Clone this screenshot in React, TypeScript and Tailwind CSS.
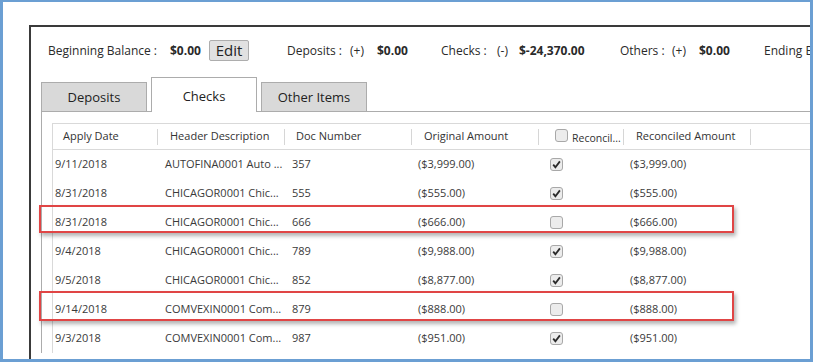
import React from "react";

const rows = [
  { date: "9/11/2018", desc: "AUTOFINA0001 Auto ...", doc: "357", amt: "($3,999.00)", checked: true },
  { date: "8/31/2018", desc: "CHICAGOR0001 Chic...", doc: "555", amt: "($555.00)", checked: true },
  { date: "8/31/2018", desc: "CHICAGOR0001 Chic...", doc: "666", amt: "($666.00)", checked: false },
  { date: "9/4/2018", desc: "CHICAGOR0001 Chic...", doc: "789", amt: "($9,988.00)", checked: true },
  { date: "9/5/2018", desc: "CHICAGOR0001 Chic...", doc: "852", amt: "($8,877.00)", checked: true },
  { date: "9/14/2018", desc: "COMVEXIN0001 Com...", doc: "879", amt: "($888.00)", checked: false },
  { date: "9/3/2018", desc: "COMVEXIN0001 Com...", doc: "987", amt: "($951.00)", checked: true },
];

function Checkbox({ checked }: { checked: boolean }) {
  return (
    <span className="grid h-[13px] w-[13px] place-items-center rounded-[3px] border border-[#a8a8a8] bg-[#ececec]">
      {checked && (
        <svg width="9" height="9" viewBox="0 0 9 9">
          <path d="M1.2 4.6 L3.4 7.2 L7.9 1.4" fill="none" stroke="#2b2b2b" strokeWidth="1.8" />
        </svg>
      )}
    </span>
  );
}

function Sep() {
  return <span className="h-[16px] w-px shrink-0 bg-[#d6d6d6]" />;
}

export default function App() {
  return (
    <div className="relative h-[362px] w-[813px] overflow-hidden border-[3px] border-t-2 border-[#6b9fd3] bg-white font-['Segoe_UI','Open_Sans',sans-serif] text-[12px] text-[#333]">
      <div className="ml-[26px] mt-[23px] h-[400px] border-l-2 border-t-2 border-[#3a3a3a]">
        {/* balance bar */}
        <div className="mt-[13px] flex h-[21px] items-center whitespace-nowrap pl-[17px] text-[#2a2a2a]">
          <span className="w-[122px] shrink-0">Beginning Balance :</span>
          <span className="w-[39px] shrink-0 font-bold">$0.00</span>
          <span className="mr-[38px] grid h-[21px] w-[40px] shrink-0 place-items-center rounded-[2px] border border-[#adadad] bg-[#e1e1e1] text-[15px] leading-none text-[#222]">
            Edit
          </span>
          <span className="w-[63px] shrink-0">Deposits :</span>
          <span className="w-[27px] shrink-0">(+)</span>
          <span className="w-[64px] shrink-0 font-bold">$0.00</span>
          <span className="w-[56px] shrink-0">Checks :</span>
          <span className="w-[22px] shrink-0">(-)</span>
          <span className="w-[101px] shrink-0 font-bold">$-24,370.00</span>
          <span className="w-[52px] shrink-0">Others :</span>
          <span className="w-[27px] shrink-0">(+)</span>
          <span className="w-[65px] shrink-0 font-bold">$0.00</span>
          <span className="shrink-0">Ending Balance :</span>
        </div>

        {/* tabs */}
        <div className="ml-[10px] mt-[16px] flex items-end gap-[4px] text-[13px] text-[#222]">
          <div className="grid h-[29px] w-[106px] place-items-center border border-b-0 border-[#acacac] bg-[#d9d9d9] pt-[2px]">Deposits</div>
          <div className="relative z-10 -mb-px grid h-[35px] w-[106px] place-items-center border border-b-0 border-[#acacac] bg-white pt-[4px]">Checks</div>
          <div className="grid h-[29px] w-[106px] place-items-center border border-b-0 border-[#acacac] bg-[#d9d9d9] pt-[2px]">Other Items</div>
        </div>

        {/* tab panel */}
        <div className="ml-[10px] border-l border-t border-[#acacac] pl-[10px] pt-[11px] text-[11px]">
          <div className="border-l border-t border-[#d9d9d9]">
            <div className="flex h-[26px] items-center border-b border-[#d9d9d9] text-[#333]">
              <div className="flex w-[105px] items-center justify-between pl-[10px]"><span>Apply Date</span><Sep /></div>
              <div className="flex w-[127px] items-center justify-between pl-[12px]"><span>Header Description</span><Sep /></div>
              <div className="flex w-[127px] items-center justify-between pl-[11px]"><span>Doc Number</span><Sep /></div>
              <div className="flex w-[127px] items-center justify-between pl-[12px]"><span>Original Amount</span><Sep /></div>
              <div className="flex w-[85px] items-center justify-between pl-[16px]">
                <span className="flex items-end gap-[4px]">
                  <span className="mb-[3px]"><Checkbox checked={false} /></span>
                  <span className="text-[10.5px] leading-[14px]">Reconcil...</span>
                </span>
                <Sep />
              </div>
              <div className="flex w-[127px] items-center justify-between pl-[12px]"><span>Reconciled Amount</span><Sep /></div>
            </div>
            {rows.map((r, i) => (
              <div key={i} className="flex h-[29px] items-center whitespace-nowrap text-[#3a3a3a]">
                <div className="w-[105px] pl-[2px]">{r.date}</div>
                <div className="w-[127px] pl-[7px]">{r.desc}</div>
                <div className="w-[127px] pl-[7px]">{r.doc}</div>
                <div className="w-[127px] pl-[6px]">{r.amt}</div>
                <div className="w-[85px] pl-[11px]"><Checkbox checked={r.checked} /></div>
                <div className="w-[127px] pl-[6px]">{r.amt}</div>
              </div>
            ))}
          </div>
        </div>
      </div>

      {/* highlight callouts */}
      <div className="absolute left-[36px] top-[203px] h-[28px] w-[695px] border-2 border-[#e04545] shadow-[2px_3px_4px_rgba(0,0,0,0.3)]" />
      <div className="absolute left-[36px] top-[289px] h-[30px] w-[695px] border-2 border-[#e04545] shadow-[2px_3px_4px_rgba(0,0,0,0.3)]" />
    </div>
  );
}
